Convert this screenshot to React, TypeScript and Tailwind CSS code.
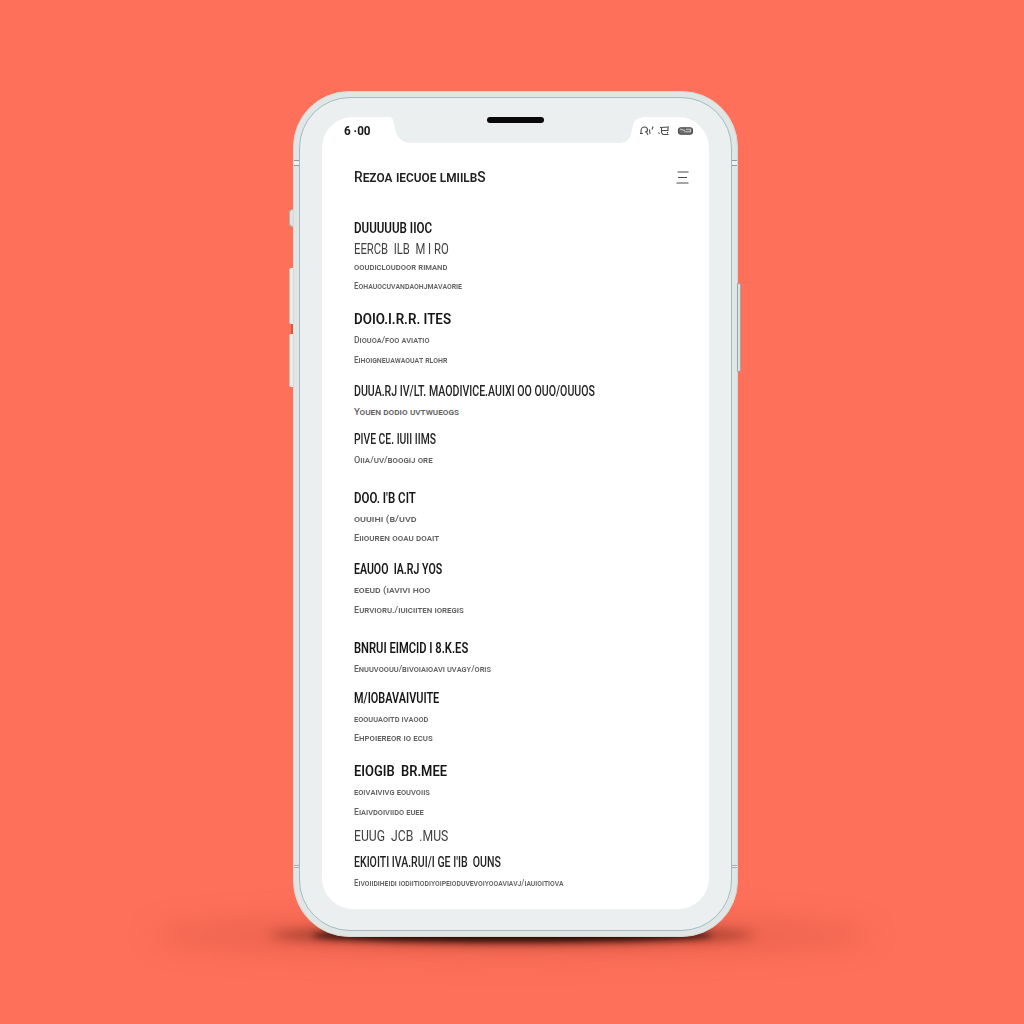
import { useLayoutEffect, useRef, useState } from "react";

type Kind = "bold" | "medium" | "light" | "small" | "tight";
type Line = [kind: Kind, width: number, text: string];
type Section = { spacing: string; lines: Line[] };

const kinds: Record<Kind, string> = {
  bold: "h-[21px] text-[15px] leading-[21px] font-semibold text-[#161616]",
  medium: "h-[21px] text-[14px] leading-[21px] font-medium text-[#242424]",
  light: "h-[19px] text-[14px] leading-[21px] font-normal text-[#404040]",
  small: "h-[19.5px] text-[9.5px] leading-[19.5px] font-medium text-[#626262] [font-variant:small-caps]",
  tight: "h-[18.5px] text-[9.5px] leading-[18.5px] font-medium text-[#626262] [font-variant:small-caps]",
};

const sections: Section[] = [
  {
    spacing: "",
    lines: [
      ["bold", 78, "DUUUUUB IIOC"],
      ["light", 95, "EERCB  ILB  M I RO"],
      ["tight", 93, "ooudicloudoor rimand"],
      ["tight", 108, "Eohauocuvandaohjmavaorie"],
    ],
  },
  {
    spacing: "mt-[14px]",
    lines: [
      ["bold", 97, "DOIO.I.R.R. ITES"],
      ["small", 76, "Diouoa/foo aviatio"],
      ["small", 93, "Eihoigneuawaouat rlohr"],
    ],
  },
  {
    spacing: "mt-3",
    lines: [
      ["medium", 241, "DUUA.RJ IV/LT. MAODIVICE.AUIXI OO OUO/OUUOS"],
      ["small", 105, "Youen dodio uvtwueogs"],
    ],
  },
  {
    spacing: "mt-[7.5px]",
    lines: [
      ["medium", 82, "PIVE CE. IUII IIMS"],
      ["small", 79, "Oiia/uv/boogij ore"],
    ],
  },
  {
    spacing: "mt-[18px]",
    lines: [
      ["bold", 62, "DOO. I'B CIT"],
      ["small", 62, "ouuihi (b/uvd"],
      ["small", 85, "Eiiouren ooau doait"],
    ],
  },
  {
    spacing: "mt-[11.5px]",
    lines: [
      ["bold", 88, "EAUOO  IA.RJ YOS"],
      ["small", 77, "eoeud (iavivi hoo"],
      ["small", 110, "Eurvioru./iuiciiten ioregis"],
    ],
  },
  {
    spacing: "mt-[18.5px]",
    lines: [
      ["bold", 114, "BNRUI EIMCID I 8.K.ES"],
      ["small", 137, "Enuuvoouu/bivoiaioavi uvagy/oris"],
    ],
  },
  {
    spacing: "mt-[9.5px]",
    lines: [
      ["bold", 85, "M/IOBAVAIVUITE"],
      ["small", 74, "eoouuaoitd ivaood"],
      ["small", 79, "Ehpoiereor io ecus"],
    ],
  },
  {
    spacing: "mt-[13.5px]",
    lines: [
      ["bold", 93, "EIOGIB  BR.MEE"],
      ["small", 76, "eoivaivivg eouvoiis"],
      ["small", 70, "Eiaivdoiviido euee"],
    ],
  },
  { spacing: "mt-[5px]", lines: [["light", 94, "EUUG  JCB  .MUS"]] },
  {
    spacing: "mt-[7px]",
    lines: [
      ["medium", 147, "EKIOITI IVA.RUI/I GE I'IB  OUNS"],
      ["small", 210, "Eivoiidiheidi iodiitiodiyoipeioduvevoiyooaviavj/iauioitiova"],
    ],
  },
];

function FittedText({ text, width, className }: { text: string; width: number; className: string }) {
  const ref = useRef<HTMLSpanElement>(null);
  const [scale, setScale] = useState(1);
  useLayoutEffect(() => {
    if (ref.current) setScale(width / ref.current.offsetWidth);
  }, [width]);
  return (
    <div className={className}>
      <span ref={ref} className="inline-block origin-left whitespace-pre" style={{ transform: `scaleX(${scale})` }}>
        {text}
      </span>
    </div>
  );
}

function StatusIcons() {
  return (
    <svg width="54" height="12" viewBox="0 0 54 12" fill="none" stroke="#4b4b4b" strokeWidth="1.1">
      <path d="M1 8.500V6C1 3.500 2.500 2 4.500 2s3 1.200 3 3-1 2-2.500 2M0 8.500h3M6 6l2 4M9.500 4.500l.5 4.500M13 1.500l-1 3" />
      <path d="M18.500 7.500l1 1.500M20 2.500l9-.5M21.500 2v5.500l1.500 2h5.500M22 5.500h6.500M28 2.500v2.500M27.500 7v1.500" />
      <rect x="38.500" y="2.800" width="14" height="6.400" rx="2.500" fill="#6b6b6b" />
      <path d="M40 4l5 1.500M46 4.200h4.500v2.600h-6" stroke="#c8c8c8" />
    </svg>
  );
}

function Notch() {
  return (
    <svg className="absolute top-0 left-[66px]" width="254" height="27" viewBox="0 0 254 27" fill="#ecefef">
      <path d="M0 0C5 0 5.500 3 6.500 9C8 19 13 26 23 26H230C240 26 242.500 21 244 13C245.500 4 247 1 254 1V0Z" />
    </svg>
  );
}

function BandMarks() {
  return (
    <div className="flex w-[5px] flex-col justify-between py-[63px]">
      <div className="h-[6px] border-y border-[#929c9c] bg-[#eef2f1]" />
      <div className="h-[3px] border-y border-[#a2acab] bg-[#eef2f1]" />
    </div>
  );
}

export default function App() {
  return (
    <main className="relative flex h-[1024px] w-[1024px] items-start overflow-hidden bg-[#fe705a] pt-[91px] pl-[289px] font-[Roboto,sans-serif]">
      <div className="absolute inset-x-[150px] bottom-[68px] h-[42px] rounded-[50%] bg-[#b83e2d]/25 blur-[14px]" />
      <div className="absolute inset-x-[270px] bottom-[80px] h-[18px] rounded-[50%] bg-[#54150d]/50 blur-[6px]" />
      <div className="absolute inset-x-[312px] bottom-[82px] h-[13px] rounded-[50%] bg-[#1c0502]/90 blur-[3px]" />

      <div className="relative flex w-[4px] flex-col pt-[118px]">
        <div className="h-[18px] rounded-l-sm border border-r-0 border-[#a9b5b5] bg-[#dce2e0]" />
        <div className="mt-[41px] h-[56px] rounded-l-[2px] border-l border-[#c9beb6] bg-[#e6eceb]" />
        <div className="ml-[2px] h-[10px] bg-[#d65b47]" />
        <div className="h-[53px] rounded-l-[2px] border-l border-[#c9beb6] bg-[#e6eceb]" />
      </div>

      <div className="relative flex h-[846px] w-[445px] rounded-[56px] border border-[#d3d9d7] bg-[#e1e6e4] py-[5px]">
        <BandMarks />
        <div className="flex-1 rounded-[51px] border border-[#a0bcc4] bg-[#ecefef] px-[22px] pt-[19px]">
          <div className="relative h-[792px] rounded-[31px] bg-white">
            <Notch />
            <header className="relative flex h-[27px] items-center pl-[22px]">
              <FittedText text="6 ·00" width={27} className="h-[14px] w-[143px] text-[13px] leading-[14px] font-bold text-[#171717]" />
              <div className="mb-[21px] h-[6px] w-[57px] rounded-full bg-[#080808]" />
              <div className="ml-[96px]">
                <StatusIcons />
              </div>
            </header>
            <div className="mt-[24px] flex h-[18px] items-center justify-between pr-[20px] pl-[32px]">
              <FittedText text="Rezoa iecuoe lmiilbS" width={132} className="text-[15px] leading-[18px] font-medium text-[#202020] [font-variant:small-caps]" />
              <svg width="13" height="13" viewBox="0 0 13 13" fill="none" stroke="#4a4a4a" strokeWidth="1.1">
                <path d="M1.500 1h11M2 6.500h9M.5 12h12" />
              </svg>
            </div>
            <div className="flex flex-col pt-8 pl-[32px]">
              {sections.map((section, i) => (
                <section key={i} className={section.spacing}>
                  {section.lines.map(([kind, width, text]) => (
                    <FittedText key={text} text={text} width={width} className={kinds[kind]} />
                  ))}
                </section>
              ))}
            </div>
          </div>
        </div>
        <BandMarks />
      </div>

      <div className="relative -ml-px w-[4px] pt-[192px]">
        <div className="h-[89px] rounded-r-[2px] border border-[#9ba8a7] bg-[#dce3e2]" />
      </div>
    </main>
  );
}
